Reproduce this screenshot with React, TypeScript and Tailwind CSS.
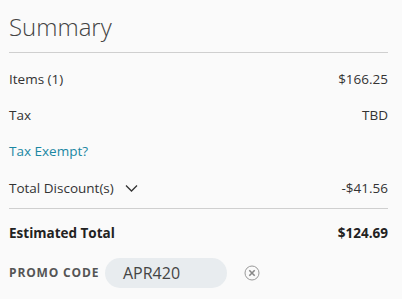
export default function App() {
  return (
    <div className="w-[402px] h-[299px] bg-[#fafafa] text-[#333] font-['Open_Sans',sans-serif] pl-[9px] pr-[14px] overflow-hidden">
      {/* Heading */}
      <h1 className="text-[24px] font-light text-[#444] leading-none pt-[15px] pb-[13px]">Summary</h1>
      <div className="border-t border-[#cfcfcf]" />

      {/* Rows */}
      <div className="flex justify-between items-center h-[36px] mt-[8px] text-[13.5px]">
        <span>Items (1)</span>
        <span>$166.25</span>
      </div>
      <div className="flex justify-between items-center h-[36px] text-[13.5px]">
        <span>Tax</span>
        <span>TBD</span>
      </div>
      <div className="flex items-center h-[37px] text-[13.5px] text-[#1b87a3]">
        <span>Tax Exempt?</span>
      </div>
      <div className="flex justify-between items-center h-[36px] text-[13.5px]">
        <span className="flex items-center gap-[11px]">
          Total Discount(s)
          <svg width="13" height="8" viewBox="0 0 13 8" fill="none">
            <path d="M1 1.5 L6.5 7 L12 1.5" stroke="#333" strokeWidth="1.3" />
          </svg>
        </span>
        <span>-$41.56</span>
      </div>
      <div className="border-t border-[#cfcfcf] mt-[2px]" />
      <div className="flex justify-between items-center h-[48px] text-[13.5px] font-bold text-[#222]">
        <span>Estimated Total</span>
        <span>$124.69</span>
      </div>

      {/* Promo code */}
      <div className="flex items-center h-[32px]">
        <span className="text-[12px] font-bold tracking-[0.07em] text-[#555] w-[96px]">PROMO CODE</span>
        <span className="h-[30px] w-[122px] rounded-full bg-[#e8ecef] flex items-center pl-[18px] text-[16px] text-[#444]">
          APR420
        </span>
        <svg className="ml-[17px]" width="16" height="16" viewBox="0 0 16 16" fill="none">
          <circle cx="8" cy="8" r="7" stroke="#999" strokeWidth="1" />
          <path d="M5.3 5.3 L10.7 10.7 M10.7 5.3 L5.3 10.7" stroke="#888" strokeWidth="1.6" />
        </svg>
      </div>
    </div>
  );
}
